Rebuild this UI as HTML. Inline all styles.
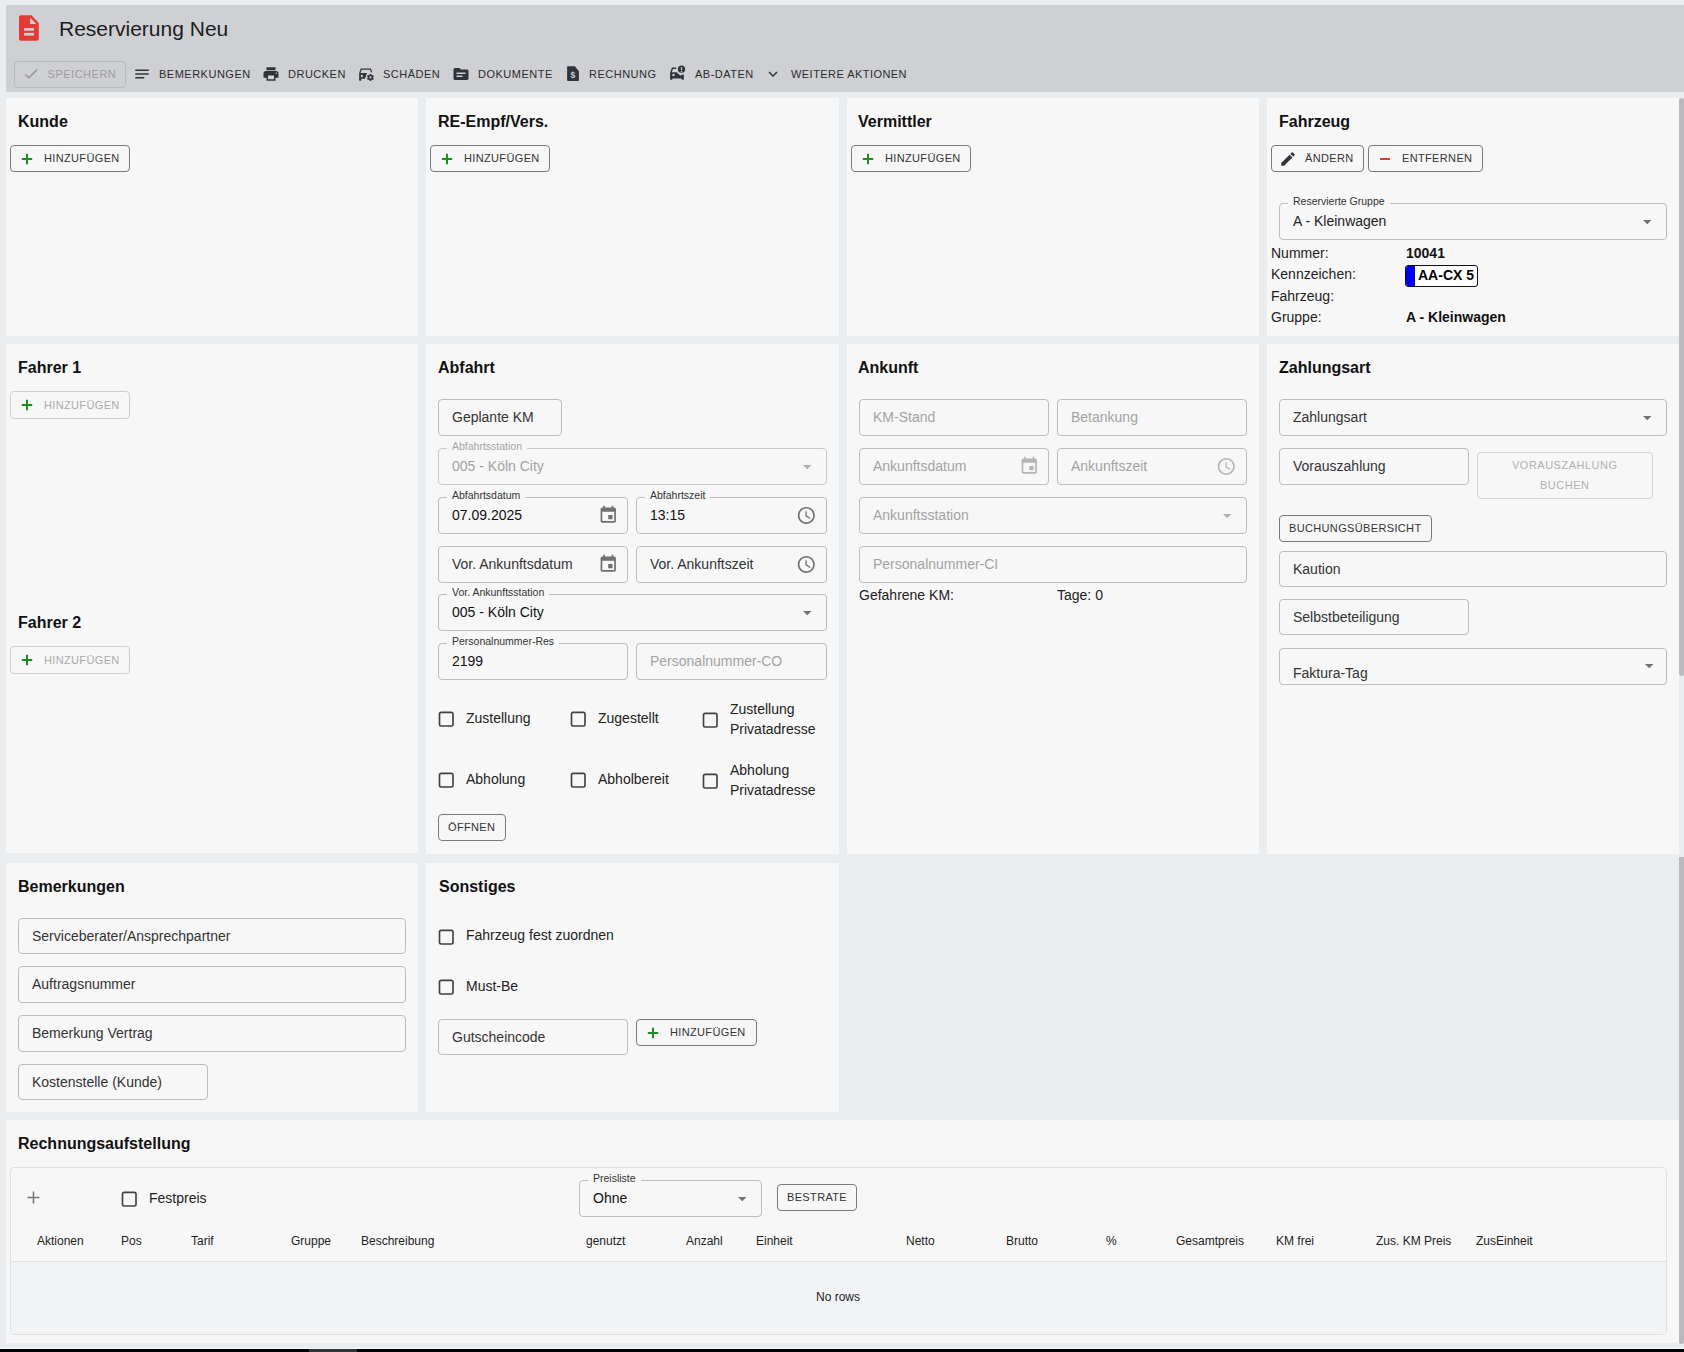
<!DOCTYPE html><html><head><meta charset="utf-8"><style>
html,body{margin:0;padding:0}body{width:1684px;height:1352px;position:relative;overflow:hidden;background:#e9edf0;font-family:"Liberation Sans",sans-serif}
.a{position:absolute;white-space:nowrap}svg{display:block}
</style></head><body>
<div class="a" style="left:6px;top:5px;width:1678px;height:87px;background:#cfd0d4"></div>
<div class="a" style="left:17px;top:13px;width:24px;height:30px"><svg width="24" height="30" viewBox="0 0 24 30"><path fill="#e53935" d="M4 2.2h10.4l7.4 7.9V25.7c0 1.2-.9 2-2 2H4c-1.1 0-2-.8-2-2V4.2c0-1.1.9-2 2-2z"/><path fill="#cfd0d4" d="M13.1 4.6V11h6.3z"/><rect x="7" y="15.1" width="10" height="2.6" fill="#cfd0d4"/><rect x="7" y="19.9" width="10" height="2.7" fill="#cfd0d4"/></svg></div>
<div class="a" style="left:59px;top:18.22px;font-size:21px;line-height:21px;color:#1c1c1c;font-weight:normal;">Reservierung Neu</div>
<div class="a" style="left:14px;top:61px;width:112px;height:27px;border:1px solid #b9babd;border-radius:4px;box-sizing:border-box"></div>
<div class="a" style="left:22px;top:65px;width:20px;height:20px"><svg width="20" height="20" viewBox="0 0 20 20"><g transform="translate(0.2 0) scale(0.733)"><path fill="#9a9a9a" d="M9 16.17L4.83 12l-1.42 1.41L9 19 21 7l-1.41-1.41z"/></g></svg></div>
<div class="a" style="left:47.6px;top:68.69px;font-size:11px;line-height:11px;color:#9d9d9f;font-weight:normal;letter-spacing:0.5px">SPEICHERN</div>
<div class="a" style="left:133px;top:65px;width:18px;height:18px"><svg width="18" height="18" viewBox="0 0 24 24"><path fill="#30343a" d="M3 18h12v-2H3v2zM3 6v2h18V6H3zm0 7h18v-2H3v2z"/></svg></div>
<div class="a" style="left:159px;top:68.69px;font-size:11px;line-height:11px;color:#2b2b2b;font-weight:normal;letter-spacing:0.5px">BEMERKUNGEN</div>
<div class="a" style="left:262px;top:65px;width:18px;height:18px"><svg width="18" height="18" viewBox="0 0 24 24"><path fill="#30343a" d="M19 8H5c-1.66 0-3 1.34-3 3v6h4v4h12v-4h4v-6c0-1.66-1.34-3-3-3zm-3 11H8v-5h8v5zm3-7c-.55 0-1-.45-1-1s.45-1 1-1 1 .45 1 1-.45 1-1 1zm-1-9H6v4h12V3z"/></svg></div>
<div class="a" style="left:288px;top:68.69px;font-size:11px;line-height:11px;color:#2b2b2b;font-weight:normal;letter-spacing:0.5px">DRUCKEN</div>
<div class="a" style="left:355px;top:62px;width:25px;height:24px"><svg width="25" height="24" viewBox="0 0 25 24"><path d="M5 18.3V10.3L6.2 7.2H15.5L16.7 10.4" fill="none" stroke="#30343a" stroke-width="1.25"/><path d="M4.4 10.9H12.1L9.9 16.8H4.4z" fill="#30343a"/><rect x="5.9" y="12.8" width="1.9" height="2.3" fill="#cfd0d4"/><rect x="4.3" y="16.3" width="2" height="2.5" rx="0.6" fill="#30343a"/><g transform="translate(15.45 15.45)" fill="#30343a"><circle r="2.7"/><rect x="-0.9" y="-3.5" width="1.8" height="7"/><rect x="-0.9" y="-3.5" width="1.8" height="7" transform="rotate(60)"/><rect x="-0.9" y="-3.5" width="1.8" height="7" transform="rotate(120)"/></g><circle cx="15.45" cy="15.45" r="1.1" fill="#cfd0d4"/></svg></div>
<div class="a" style="left:383px;top:68.69px;font-size:11px;line-height:11px;color:#2b2b2b;font-weight:normal;letter-spacing:0.5px">SCHÄDEN</div>
<div class="a" style="left:452px;top:65px;width:18px;height:18px"><svg width="18" height="18" viewBox="0 0 24 24"><path fill="#30343a" d="M20 6h-8l-2-2H4c-1.1 0-2 .9-2 2v12c0 1.1.9 2 2 2h16c1.1 0 2-.9 2-2V8c0-1.1-.9-2-2-2zm-6 10H6v-2h8v2zm4-4H6v-2h12v2z"/></svg></div>
<div class="a" style="left:478px;top:68.69px;font-size:11px;line-height:11px;color:#2b2b2b;font-weight:normal;letter-spacing:0.5px">DOKUMENTE</div>
<div class="a" style="left:560px;top:62px;width:30px;height:24px"><svg width="30" height="24" viewBox="0 0 30 24"><path d="M8.1 4.3H14.8L18.9 9.3V18.1c0 .55-.45 1-1 1H8.1c-.55 0-1-.45-1-1V5.3c0-.55.45-1 1-1z" fill="#30343a"/><text x="13" y="16" font-size="8.6" font-weight="bold" fill="#cfd0d4" text-anchor="middle" font-family="Liberation Sans">$</text></svg></div>
<div class="a" style="left:589px;top:68.69px;font-size:11px;line-height:11px;color:#2b2b2b;font-weight:normal;letter-spacing:0.5px">RECHNUNG</div>
<div class="a" style="left:665px;top:60px;width:30px;height:26px"><svg width="30" height="26" viewBox="0 0 30 26"><path d="M6 18.8V12.4L7.4 8.3H11.2" fill="none" stroke="#30343a" stroke-width="1.4"/><path d="M5.3 12.3H11.5L15.2 15.4L18.8 14.3V18.6H5.3z" fill="#30343a"/><circle cx="8.5" cy="15" r="1.25" fill="#cfd0d4"/><rect x="5.2" y="17.5" width="2.1" height="2.3" rx="0.6" fill="#30343a"/><rect x="16.6" y="17.5" width="2.2" height="2.3" rx="0.6" fill="#30343a"/><circle cx="16.5" cy="9.2" r="3.6" fill="#30343a"/><rect x="15.85" y="7.2" width="1.3" height="2.9" fill="#cfd0d4"/><rect x="15.85" y="10.9" width="1.3" height="1.1" fill="#cfd0d4"/></svg></div>
<div class="a" style="left:695px;top:68.69px;font-size:11px;line-height:11px;color:#2b2b2b;font-weight:normal;letter-spacing:0.5px">AB-DATEN</div>
<div class="a" style="left:764px;top:65px;width:18px;height:18px"><svg width="18" height="18" viewBox="0 0 24 24"><path fill="#30343a" d="M16.59 8.59L12 13.17 7.41 8.59 6 10l6 6 6-6z"/></svg></div>
<div class="a" style="left:791px;top:68.69px;font-size:11px;line-height:11px;color:#2b2b2b;font-weight:normal;letter-spacing:0.45px">WEITERE AKTIONEN</div>
<div class="a" style="left:6px;top:98px;width:412px;height:238px;background:#f7f7f7"></div>
<div class="a" style="left:426px;top:98px;width:413px;height:238px;background:#f7f7f7"></div>
<div class="a" style="left:847px;top:98px;width:412px;height:238px;background:#f7f7f7"></div>
<div class="a" style="left:1267px;top:98px;width:412px;height:238px;background:#f7f7f7"></div>
<div class="a" style="left:18px;top:114.46px;font-size:16px;line-height:16px;color:#111;font-weight:bold;">Kunde</div>
<div class="a" style="left:438px;top:114.46px;font-size:16px;line-height:16px;color:#111;font-weight:bold;">RE-Empf/Vers.</div>
<div class="a" style="left:858px;top:114.46px;font-size:16px;line-height:16px;color:#111;font-weight:bold;">Vermittler</div>
<div class="a" style="left:1279px;top:114.46px;font-size:16px;line-height:16px;color:#111;font-weight:bold;">Fahrzeug</div>
<div class="a" style="left:10px;top:145px;width:120px;height:27px;border:1px solid #7a7a7a;border-radius:4px;box-sizing:border-box"></div>
<div class="a" style="left:21px;top:152.5px;width:12px;height:12px"><svg width="12" height="12" viewBox="0 0 12 12"><path d="M6 0.8v10.4M0.8 6h10.4" stroke="#1e8c1e" stroke-width="2"/></svg></div>
<div class="a" style="left:44px;top:153.13px;font-size:11px;line-height:11px;color:#333;font-weight:normal;letter-spacing:0.35px">HINZUFÜGEN</div>
<div class="a" style="left:430px;top:145px;width:120px;height:27px;border:1px solid #7a7a7a;border-radius:4px;box-sizing:border-box"></div>
<div class="a" style="left:441px;top:152.5px;width:12px;height:12px"><svg width="12" height="12" viewBox="0 0 12 12"><path d="M6 0.8v10.4M0.8 6h10.4" stroke="#1e8c1e" stroke-width="2"/></svg></div>
<div class="a" style="left:464px;top:153.13px;font-size:11px;line-height:11px;color:#333;font-weight:normal;letter-spacing:0.35px">HINZUFÜGEN</div>
<div class="a" style="left:851px;top:145px;width:120px;height:27px;border:1px solid #7a7a7a;border-radius:4px;box-sizing:border-box"></div>
<div class="a" style="left:862px;top:152.5px;width:12px;height:12px"><svg width="12" height="12" viewBox="0 0 12 12"><path d="M6 0.8v10.4M0.8 6h10.4" stroke="#1e8c1e" stroke-width="2"/></svg></div>
<div class="a" style="left:885px;top:153.13px;font-size:11px;line-height:11px;color:#333;font-weight:normal;letter-spacing:0.35px">HINZUFÜGEN</div>
<div class="a" style="left:1271px;top:145px;width:93px;height:27px;border:1px solid #7a7a7a;border-radius:4px;box-sizing:border-box"></div>
<div class="a" style="left:1279px;top:149.5px;width:18px;height:18px"><svg width="18" height="18" viewBox="0 0 24 24"><path fill="#30343a" d="M3 17.25V21h3.75L17.81 9.94l-3.75-3.75L3 17.25zM20.71 7.04c.39-.39.39-1.02 0-1.41l-2.34-2.34c-.39-.39-1.02-.39-1.41 0l-1.83 1.83 3.75 3.75 1.83-1.83z"/></svg></div>
<div class="a" style="left:1305px;top:153.13px;font-size:11px;line-height:11px;color:#333;font-weight:normal;letter-spacing:0.35px">ÄNDERN</div>
<div class="a" style="left:1368px;top:145px;width:115px;height:27px;border:1px solid #7a7a7a;border-radius:4px;box-sizing:border-box"></div>
<div class="a" style="left:1379px;top:152.5px;width:12px;height:12px"><svg width="12" height="12" viewBox="0 0 12 12"><path d="M1 6h10" stroke="#e53935" stroke-width="2"/></svg></div>
<div class="a" style="left:1402px;top:153.13px;font-size:11px;line-height:11px;color:#333;font-weight:normal;letter-spacing:0.35px">ENTFERNEN</div>
<div class="a" style="left:1279px;top:203px;width:388px;height:37px;border:1px solid #bdbdbd;border-radius:4px;box-sizing:border-box"></div>
<div class="a" style="left:1288px;top:201px;width:101.6203125px;height:4px;background:#f7f7f7"></div>
<div class="a" style="left:1293px;top:196.11px;font-size:10.5px;line-height:10.5px;color:#333;font-weight:normal;">Reservierte Gruppe</div>
<div class="a" style="left:1293px;top:214.15px;font-size:14px;line-height:14px;color:#212121;font-weight:normal;">A - Kleinwagen</div>
<div class="a" style="left:1643.05px;top:220.00px;width:9px;height:5px"><svg width="9" height="5" viewBox="0 0 9 5"><path d="M0 0h8.5L4.25 4.3z" fill="#707070"/></svg></div>
<div class="a" style="left:1271px;top:246.15px;font-size:14px;line-height:14px;color:#222;font-weight:normal;">Nummer:</div>
<div class="a" style="left:1406px;top:246.15px;font-size:14px;line-height:14px;color:#111;font-weight:bold;">10041</div>
<div class="a" style="left:1271px;top:267.15px;font-size:14px;line-height:14px;color:#222;font-weight:normal;">Kennzeichen:</div>
<div class="a" style="left:1271px;top:289.15px;font-size:14px;line-height:14px;color:#222;font-weight:normal;">Fahrzeug:</div>
<div class="a" style="left:1271px;top:310.15px;font-size:14px;line-height:14px;color:#222;font-weight:normal;">Gruppe:</div>
<div class="a" style="left:1406px;top:310.15px;font-size:14px;line-height:14px;color:#111;font-weight:bold;">A - Kleinwagen</div>
<div class="a" style="left:1405px;top:265px;width:73px;height:22px;border:1.5px solid #111;border-radius:3px;box-sizing:border-box;background:#fff;overflow:hidden"><div style="position:absolute;left:0;top:0;width:9px;height:100%;background:#0000ee"></div></div>
<div class="a" style="left:1418px;top:268.15px;font-size:14px;line-height:14px;color:#000;font-weight:bold;">AA-CX 5</div>
<div class="a" style="left:6px;top:344px;width:412px;height:509px;background:#f7f7f7"></div>
<div class="a" style="left:426px;top:344px;width:413px;height:510px;background:#f7f7f7"></div>
<div class="a" style="left:847px;top:344px;width:412px;height:510px;background:#f7f7f7"></div>
<div class="a" style="left:1267px;top:344px;width:412px;height:510px;background:#f7f7f7"></div>
<div class="a" style="left:18px;top:360.46px;font-size:16px;line-height:16px;color:#111;font-weight:bold;">Fahrer 1</div>
<div class="a" style="left:438px;top:360.46px;font-size:16px;line-height:16px;color:#111;font-weight:bold;">Abfahrt</div>
<div class="a" style="left:858px;top:360.46px;font-size:16px;line-height:16px;color:#111;font-weight:bold;">Ankunft</div>
<div class="a" style="left:1279px;top:360.46px;font-size:16px;line-height:16px;color:#111;font-weight:bold;">Zahlungsart</div>
<div class="a" style="left:10px;top:391px;width:120px;height:28px;border:1px solid #cfcfcf;border-radius:4px;box-sizing:border-box"></div>
<div class="a" style="left:21px;top:399.0px;width:12px;height:12px"><svg width="12" height="12" viewBox="0 0 12 12"><path d="M6 0.8v10.4M0.8 6h10.4" stroke="#1e8c1e" stroke-width="2"/></svg></div>
<div class="a" style="left:44px;top:399.63px;font-size:11px;line-height:11px;color:#ababab;font-weight:normal;letter-spacing:0.35px">HINZUFÜGEN</div>
<div class="a" style="left:18px;top:615.46px;font-size:16px;line-height:16px;color:#111;font-weight:bold;">Fahrer 2</div>
<div class="a" style="left:10px;top:646px;width:120px;height:28px;border:1px solid #cfcfcf;border-radius:4px;box-sizing:border-box"></div>
<div class="a" style="left:21px;top:654.0px;width:12px;height:12px"><svg width="12" height="12" viewBox="0 0 12 12"><path d="M6 0.8v10.4M0.8 6h10.4" stroke="#1e8c1e" stroke-width="2"/></svg></div>
<div class="a" style="left:44px;top:654.63px;font-size:11px;line-height:11px;color:#ababab;font-weight:normal;letter-spacing:0.35px">HINZUFÜGEN</div>
<div class="a" style="left:438px;top:399px;width:124px;height:37px;border:1px solid #bdbdbd;border-radius:4px;box-sizing:border-box"></div>
<div class="a" style="left:452px;top:410.15px;font-size:14px;line-height:14px;color:#333;font-weight:normal;">Geplante KM</div>
<div class="a" style="left:438px;top:448px;width:389px;height:37px;border:1px solid #c9c9c9;border-radius:4px;box-sizing:border-box"></div>
<div class="a" style="left:447px;top:446px;width:80.0359375px;height:4px;background:#f7f7f7"></div>
<div class="a" style="left:452px;top:441.11px;font-size:10.5px;line-height:10.5px;color:#a6a6a6;font-weight:normal;">Abfahrtsstation</div>
<div class="a" style="left:452px;top:459.15px;font-size:14px;line-height:14px;color:#a3a3a3;font-weight:normal;">005 - Köln City</div>
<div class="a" style="left:803.05px;top:465.00px;width:9px;height:5px"><svg width="9" height="5" viewBox="0 0 9 5"><path d="M0 0h8.5L4.25 4.3z" fill="#b0b0b0"/></svg></div>
<div class="a" style="left:438px;top:497px;width:190px;height:37px;border:1px solid #bdbdbd;border-radius:4px;box-sizing:border-box"></div>
<div class="a" style="left:447px;top:495px;width:78.2828125px;height:4px;background:#f7f7f7"></div>
<div class="a" style="left:452px;top:490.11px;font-size:10.5px;line-height:10.5px;color:#333;font-weight:normal;">Abfahrtsdatum</div>
<div class="a" style="left:452px;top:508.15px;font-size:14px;line-height:14px;color:#111;font-weight:normal;">07.09.2025</div>
<div class="a" style="left:598px;top:504px;width:24px;height:24px"><svg width="24" height="24" viewBox="0 0 24 24"><g transform="translate(0.05 0.85) scale(0.85)"><path fill="#707070" d="M17 12h-5v5h5v-5zM16 1v2H8V1H6v2H5c-1.11 0-1.99.9-1.99 2L3 19c0 1.1.89 2 2 2h14c1.1 0 2-.9 2-2V5c0-1.1-.9-2-2-2h-1V1h-2zm3 18H5V8h14v11z"/></g></svg></div>
<div class="a" style="left:636px;top:497px;width:191px;height:37px;border:1px solid #bdbdbd;border-radius:4px;box-sizing:border-box"></div>
<div class="a" style="left:645px;top:495px;width:65.440625px;height:4px;background:#f7f7f7"></div>
<div class="a" style="left:650px;top:490.11px;font-size:10.5px;line-height:10.5px;color:#333;font-weight:normal;">Abfahrtszeit</div>
<div class="a" style="left:650px;top:508.15px;font-size:14px;line-height:14px;color:#111;font-weight:normal;">13:15</div>
<div class="a" style="left:794px;top:503px;width:24px;height:24px"><svg width="24" height="24" viewBox="0 0 24 24"><g transform="translate(2.10 2.20) scale(0.85)"><path fill="#707070" d="M11.99 2C6.47 2 2 6.48 2 12s4.47 10 9.99 10C17.52 22 22 17.52 22 12S17.52 2 11.99 2zM12 20c-4.42 0-8-3.58-8-8s3.58-8 8-8 8 3.58 8 8-3.58 8-8 8zm.5-13H11v6l5.25 3.15.75-1.23-4.5-2.67z"/></g></svg></div>
<div class="a" style="left:438px;top:546px;width:190px;height:37px;border:1px solid #bdbdbd;border-radius:4px;box-sizing:border-box"></div>
<div class="a" style="left:452px;top:557.15px;font-size:14px;line-height:14px;color:#333;font-weight:normal;">Vor. Ankunftsdatum</div>
<div class="a" style="left:598px;top:553px;width:24px;height:24px"><svg width="24" height="24" viewBox="0 0 24 24"><g transform="translate(0.05 0.85) scale(0.85)"><path fill="#707070" d="M17 12h-5v5h5v-5zM16 1v2H8V1H6v2H5c-1.11 0-1.99.9-1.99 2L3 19c0 1.1.89 2 2 2h14c1.1 0 2-.9 2-2V5c0-1.1-.9-2-2-2h-1V1h-2zm3 18H5V8h14v11z"/></g></svg></div>
<div class="a" style="left:636px;top:546px;width:191px;height:37px;border:1px solid #bdbdbd;border-radius:4px;box-sizing:border-box"></div>
<div class="a" style="left:650px;top:557.15px;font-size:14px;line-height:14px;color:#333;font-weight:normal;">Vor. Ankunftszeit</div>
<div class="a" style="left:794px;top:552px;width:24px;height:24px"><svg width="24" height="24" viewBox="0 0 24 24"><g transform="translate(2.10 2.20) scale(0.85)"><path fill="#707070" d="M11.99 2C6.47 2 2 6.48 2 12s4.47 10 9.99 10C17.52 22 22 17.52 22 12S17.52 2 11.99 2zM12 20c-4.42 0-8-3.58-8-8s3.58-8 8-8 8 3.58 8 8-3.58 8-8 8zm.5-13H11v6l5.25 3.15.75-1.23-4.5-2.67z"/></g></svg></div>
<div class="a" style="left:438px;top:594px;width:389px;height:37px;border:1px solid #bdbdbd;border-radius:4px;box-sizing:border-box"></div>
<div class="a" style="left:447px;top:592px;width:102.2234375px;height:4px;background:#f7f7f7"></div>
<div class="a" style="left:452px;top:587.11px;font-size:10.5px;line-height:10.5px;color:#333;font-weight:normal;">Vor. Ankunftsstation</div>
<div class="a" style="left:452px;top:605.15px;font-size:14px;line-height:14px;color:#111;font-weight:normal;">005 - Köln City</div>
<div class="a" style="left:803.05px;top:611.00px;width:9px;height:5px"><svg width="9" height="5" viewBox="0 0 9 5"><path d="M0 0h8.5L4.25 4.3z" fill="#707070"/></svg></div>
<div class="a" style="left:438px;top:643px;width:190px;height:37px;border:1px solid #bdbdbd;border-radius:4px;box-sizing:border-box"></div>
<div class="a" style="left:447px;top:641px;width:112.115625px;height:4px;background:#f7f7f7"></div>
<div class="a" style="left:452px;top:636.11px;font-size:10.5px;line-height:10.5px;color:#333;font-weight:normal;">Personalnummer-Res</div>
<div class="a" style="left:452px;top:654.15px;font-size:14px;line-height:14px;color:#111;font-weight:normal;">2199</div>
<div class="a" style="left:636px;top:643px;width:191px;height:37px;border:1px solid #bdbdbd;border-radius:4px;box-sizing:border-box"></div>
<div class="a" style="left:650px;top:654.15px;font-size:14px;line-height:14px;color:#a3a3a3;font-weight:normal;">Personalnummer-CO</div>
<div class="a" style="left:437px;top:710px;width:19px;height:19px"><svg width="19" height="19" viewBox="0 0 19 19"><rect x="2.5" y="2.35" width="13.5" height="13.6" rx="1.7" fill="none" stroke="#424242" stroke-width="1.65"/></svg></div>
<div class="a" style="left:569px;top:710px;width:19px;height:19px"><svg width="19" height="19" viewBox="0 0 19 19"><rect x="2.5" y="2.35" width="13.5" height="13.6" rx="1.7" fill="none" stroke="#424242" stroke-width="1.65"/></svg></div>
<div class="a" style="left:701px;top:711px;width:19px;height:19px"><svg width="19" height="19" viewBox="0 0 19 19"><rect x="2.5" y="2.35" width="13.5" height="13.6" rx="1.7" fill="none" stroke="#424242" stroke-width="1.65"/></svg></div>
<div class="a" style="left:437px;top:771px;width:19px;height:19px"><svg width="19" height="19" viewBox="0 0 19 19"><rect x="2.5" y="2.35" width="13.5" height="13.6" rx="1.7" fill="none" stroke="#424242" stroke-width="1.65"/></svg></div>
<div class="a" style="left:569px;top:771px;width:19px;height:19px"><svg width="19" height="19" viewBox="0 0 19 19"><rect x="2.5" y="2.35" width="13.5" height="13.6" rx="1.7" fill="none" stroke="#424242" stroke-width="1.65"/></svg></div>
<div class="a" style="left:701px;top:772px;width:19px;height:19px"><svg width="19" height="19" viewBox="0 0 19 19"><rect x="2.5" y="2.35" width="13.5" height="13.6" rx="1.7" fill="none" stroke="#424242" stroke-width="1.65"/></svg></div>
<div class="a" style="left:466px;top:711.15px;font-size:14px;line-height:14px;color:#222;font-weight:normal;">Zustellung</div>
<div class="a" style="left:598px;top:711.15px;font-size:14px;line-height:14px;color:#222;font-weight:normal;">Zugestellt</div>
<div class="a" style="left:730px;top:702.15px;font-size:14px;line-height:14px;color:#222;font-weight:normal;">Zustellung</div>
<div class="a" style="left:730px;top:722.15px;font-size:14px;line-height:14px;color:#222;font-weight:normal;">Privatadresse</div>
<div class="a" style="left:466px;top:772.15px;font-size:14px;line-height:14px;color:#222;font-weight:normal;">Abholung</div>
<div class="a" style="left:598px;top:772.15px;font-size:14px;line-height:14px;color:#222;font-weight:normal;">Abholbereit</div>
<div class="a" style="left:730px;top:763.15px;font-size:14px;line-height:14px;color:#222;font-weight:normal;">Abholung</div>
<div class="a" style="left:730px;top:783.15px;font-size:14px;line-height:14px;color:#222;font-weight:normal;">Privatadresse</div>
<div class="a" style="left:438px;top:814px;width:68px;height:27px;border:1px solid #7a7a7a;border-radius:4px;box-sizing:border-box"></div>
<div class="a" style="left:448px;top:822.13px;font-size:11px;line-height:11px;color:#333;font-weight:normal;letter-spacing:0.35px">ÖFFNEN</div>
<div class="a" style="left:859px;top:399px;width:190px;height:37px;border:1px solid #bdbdbd;border-radius:4px;box-sizing:border-box"></div>
<div class="a" style="left:873px;top:410.15px;font-size:14px;line-height:14px;color:#a3a3a3;font-weight:normal;">KM-Stand</div>
<div class="a" style="left:1057px;top:399px;width:190px;height:37px;border:1px solid #bdbdbd;border-radius:4px;box-sizing:border-box"></div>
<div class="a" style="left:1071px;top:410.15px;font-size:14px;line-height:14px;color:#a3a3a3;font-weight:normal;">Betankung</div>
<div class="a" style="left:859px;top:448px;width:190px;height:37px;border:1px solid #bdbdbd;border-radius:4px;box-sizing:border-box"></div>
<div class="a" style="left:873px;top:459.15px;font-size:14px;line-height:14px;color:#a3a3a3;font-weight:normal;">Ankunftsdatum</div>
<div class="a" style="left:1019px;top:455px;width:24px;height:24px"><svg width="24" height="24" viewBox="0 0 24 24"><g transform="translate(0.05 0.85) scale(0.85)"><path fill="#b5b5b5" d="M17 12h-5v5h5v-5zM16 1v2H8V1H6v2H5c-1.11 0-1.99.9-1.99 2L3 19c0 1.1.89 2 2 2h14c1.1 0 2-.9 2-2V5c0-1.1-.9-2-2-2h-1V1h-2zm3 18H5V8h14v11z"/></g></svg></div>
<div class="a" style="left:1057px;top:448px;width:190px;height:37px;border:1px solid #bdbdbd;border-radius:4px;box-sizing:border-box"></div>
<div class="a" style="left:1071px;top:459.15px;font-size:14px;line-height:14px;color:#a3a3a3;font-weight:normal;">Ankunftszeit</div>
<div class="a" style="left:1214px;top:454px;width:24px;height:24px"><svg width="24" height="24" viewBox="0 0 24 24"><g transform="translate(2.10 2.20) scale(0.85)"><path fill="#b5b5b5" d="M11.99 2C6.47 2 2 6.48 2 12s4.47 10 9.99 10C17.52 22 22 17.52 22 12S17.52 2 11.99 2zM12 20c-4.42 0-8-3.58-8-8s3.58-8 8-8 8 3.58 8 8-3.58 8-8 8zm.5-13H11v6l5.25 3.15.75-1.23-4.5-2.67z"/></g></svg></div>
<div class="a" style="left:859px;top:497px;width:388px;height:37px;border:1px solid #bdbdbd;border-radius:4px;box-sizing:border-box"></div>
<div class="a" style="left:873px;top:508.15px;font-size:14px;line-height:14px;color:#a3a3a3;font-weight:normal;">Ankunftsstation</div>
<div class="a" style="left:1223.05px;top:514.00px;width:9px;height:5px"><svg width="9" height="5" viewBox="0 0 9 5"><path d="M0 0h8.5L4.25 4.3z" fill="#b0b0b0"/></svg></div>
<div class="a" style="left:859px;top:546px;width:388px;height:37px;border:1px solid #bdbdbd;border-radius:4px;box-sizing:border-box"></div>
<div class="a" style="left:873px;top:557.15px;font-size:14px;line-height:14px;color:#a3a3a3;font-weight:normal;">Personalnummer-CI</div>
<div class="a" style="left:859px;top:588.15px;font-size:14px;line-height:14px;color:#222;font-weight:normal;">Gefahrene KM:</div>
<div class="a" style="left:1057px;top:588.15px;font-size:14px;line-height:14px;color:#222;font-weight:normal;">Tage: 0</div>
<div class="a" style="left:1279px;top:399px;width:388px;height:37px;border:1px solid #bdbdbd;border-radius:4px;box-sizing:border-box"></div>
<div class="a" style="left:1293px;top:410.15px;font-size:14px;line-height:14px;color:#333;font-weight:normal;">Zahlungsart</div>
<div class="a" style="left:1643.05px;top:416.00px;width:9px;height:5px"><svg width="9" height="5" viewBox="0 0 9 5"><path d="M0 0h8.5L4.25 4.3z" fill="#707070"/></svg></div>
<div class="a" style="left:1279px;top:448px;width:190px;height:37px;border:1px solid #bdbdbd;border-radius:4px;box-sizing:border-box"></div>
<div class="a" style="left:1293px;top:459.15px;font-size:14px;line-height:14px;color:#333;font-weight:normal;">Vorauszahlung</div>
<div class="a" style="left:1477px;top:452px;width:176px;height:47px;border:1px solid #d3d3d3;border-radius:4px;box-sizing:border-box"></div>
<div class="a" style="left:1512px;top:459.69px;font-size:11px;line-height:11px;color:#b0b0b0;font-weight:normal;letter-spacing:0.5px">VORAUSZAHLUNG</div>
<div class="a" style="left:1540px;top:479.69px;font-size:11px;line-height:11px;color:#b0b0b0;font-weight:normal;letter-spacing:0.5px">BUCHEN</div>
<div class="a" style="left:1279px;top:515px;width:153px;height:27px;border:1px solid #7a7a7a;border-radius:4px;box-sizing:border-box"></div>
<div class="a" style="left:1289px;top:523.13px;font-size:11px;line-height:11px;color:#333;font-weight:normal;letter-spacing:0.35px">BUCHUNGSÜBERSICHT</div>
<div class="a" style="left:1279px;top:551px;width:388px;height:36px;border:1px solid #bdbdbd;border-radius:4px;box-sizing:border-box"></div>
<div class="a" style="left:1293px;top:562.15px;font-size:14px;line-height:14px;color:#333;font-weight:normal;">Kaution</div>
<div class="a" style="left:1279px;top:599px;width:190px;height:36px;border:1px solid #bdbdbd;border-radius:4px;box-sizing:border-box"></div>
<div class="a" style="left:1293px;top:610.15px;font-size:14px;line-height:14px;color:#333;font-weight:normal;">Selbstbeteiligung</div>
<div class="a" style="left:1279px;top:648px;width:388px;height:37px;border:1px solid #bdbdbd;border-radius:4px;box-sizing:border-box"></div>
<div class="a" style="left:1644.55px;top:664.00px;width:9px;height:5px"><svg width="9" height="5" viewBox="0 0 9 5"><path d="M0 0h8.5L4.25 4.3z" fill="#707070"/></svg></div>
<div class="a" style="left:1293px;top:666.15px;font-size:14px;line-height:14px;color:#333;font-weight:normal;">Faktura-Tag</div>
<div class="a" style="left:6px;top:863px;width:412px;height:249px;background:#f7f7f7"></div>
<div class="a" style="left:426px;top:863px;width:413px;height:249px;background:#f7f7f7"></div>
<div class="a" style="left:18px;top:879.46px;font-size:16px;line-height:16px;color:#111;font-weight:bold;">Bemerkungen</div>
<div class="a" style="left:439px;top:879.46px;font-size:16px;line-height:16px;color:#111;font-weight:bold;">Sonstiges</div>
<div class="a" style="left:18px;top:918px;width:388px;height:36px;border:1px solid #bdbdbd;border-radius:4px;box-sizing:border-box"></div>
<div class="a" style="left:32px;top:929.15px;font-size:14px;line-height:14px;color:#333;font-weight:normal;">Serviceberater/Ansprechpartner</div>
<div class="a" style="left:18px;top:966px;width:388px;height:37px;border:1px solid #bdbdbd;border-radius:4px;box-sizing:border-box"></div>
<div class="a" style="left:32px;top:977.15px;font-size:14px;line-height:14px;color:#333;font-weight:normal;">Auftragsnummer</div>
<div class="a" style="left:18px;top:1015px;width:388px;height:37px;border:1px solid #bdbdbd;border-radius:4px;box-sizing:border-box"></div>
<div class="a" style="left:32px;top:1026.15px;font-size:14px;line-height:14px;color:#333;font-weight:normal;">Bemerkung Vertrag</div>
<div class="a" style="left:18px;top:1064px;width:190px;height:36px;border:1px solid #bdbdbd;border-radius:4px;box-sizing:border-box"></div>
<div class="a" style="left:32px;top:1075.15px;font-size:14px;line-height:14px;color:#333;font-weight:normal;">Kostenstelle (Kunde)</div>
<div class="a" style="left:437px;top:928px;width:19px;height:19px"><svg width="19" height="19" viewBox="0 0 19 19"><rect x="2.5" y="2.35" width="13.5" height="13.6" rx="1.7" fill="none" stroke="#424242" stroke-width="1.65"/></svg></div>
<div class="a" style="left:466px;top:928.15px;font-size:14px;line-height:14px;color:#222;font-weight:normal;">Fahrzeug fest zuordnen</div>
<div class="a" style="left:437px;top:978px;width:19px;height:19px"><svg width="19" height="19" viewBox="0 0 19 19"><rect x="2.5" y="2.35" width="13.5" height="13.6" rx="1.7" fill="none" stroke="#424242" stroke-width="1.65"/></svg></div>
<div class="a" style="left:466px;top:979.15px;font-size:14px;line-height:14px;color:#222;font-weight:normal;">Must-Be</div>
<div class="a" style="left:438px;top:1019px;width:190px;height:36px;border:1px solid #bdbdbd;border-radius:4px;box-sizing:border-box"></div>
<div class="a" style="left:452px;top:1030.15px;font-size:14px;line-height:14px;color:#333;font-weight:normal;">Gutscheincode</div>
<div class="a" style="left:636px;top:1019px;width:121px;height:27px;border:1px solid #7a7a7a;border-radius:4px;box-sizing:border-box"></div>
<div class="a" style="left:647px;top:1026.5px;width:12px;height:12px"><svg width="12" height="12" viewBox="0 0 12 12"><path d="M6 0.8v10.4M0.8 6h10.4" stroke="#1e8c1e" stroke-width="2"/></svg></div>
<div class="a" style="left:670px;top:1027.13px;font-size:11px;line-height:11px;color:#333;font-weight:normal;letter-spacing:0.35px">HINZUFÜGEN</div>
<div class="a" style="left:6px;top:1120px;width:1673px;height:223px;background:#f7f7f7"></div>
<div class="a" style="left:18px;top:1136.46px;font-size:16px;line-height:16px;color:#111;font-weight:bold;">Rechnungsaufstellung</div>
<div class="a" style="left:10px;top:1167px;width:1657px;height:168px;border:1px solid #e0e0e0;border-radius:4px;box-sizing:border-box;overflow:hidden"><div style="position:absolute;left:0;right:0;top:93px;bottom:0;background:#f2f3f5;border-top:1px solid #e0e0e0"></div></div>
<div class="a" style="left:26.6px;top:1191px;width:13px;height:13px"><svg width="13" height="13" viewBox="0 0 13 13"><path d="M6.5 0.5v12M0.5 6.5h12" stroke="#757575" stroke-width="1.5"/></svg></div>
<div class="a" style="left:120px;top:1190px;width:19px;height:19px"><svg width="19" height="19" viewBox="0 0 19 19"><rect x="2.5" y="2.35" width="13.5" height="13.6" rx="1.7" fill="none" stroke="#424242" stroke-width="1.65"/></svg></div>
<div class="a" style="left:149px;top:1191.15px;font-size:14px;line-height:14px;color:#222;font-weight:normal;">Festpreis</div>
<div class="a" style="left:579px;top:1180px;width:183px;height:37px;border:1px solid #bdbdbd;border-radius:4px;box-sizing:border-box"></div>
<div class="a" style="left:588px;top:1178px;width:52.59375px;height:4px;background:#f7f7f7"></div>
<div class="a" style="left:593px;top:1173.11px;font-size:10.5px;line-height:10.5px;color:#333;font-weight:normal;">Preisliste</div>
<div class="a" style="left:593px;top:1191.15px;font-size:14px;line-height:14px;color:#111;font-weight:normal;">Ohne</div>
<div class="a" style="left:738.05px;top:1197.00px;width:9px;height:5px"><svg width="9" height="5" viewBox="0 0 9 5"><path d="M0 0h8.5L4.25 4.3z" fill="#707070"/></svg></div>
<div class="a" style="left:777px;top:1184px;width:80px;height:27px;border:1px solid #7a7a7a;border-radius:4px;box-sizing:border-box"></div>
<div class="a" style="left:787px;top:1192.13px;font-size:11px;line-height:11px;color:#333;font-weight:normal;letter-spacing:0.35px">BESTRATE</div>
<div class="a" style="left:37px;top:1234.84px;font-size:12px;line-height:12px;color:#222;font-weight:normal;">Aktionen</div>
<div class="a" style="left:121px;top:1234.84px;font-size:12px;line-height:12px;color:#222;font-weight:normal;">Pos</div>
<div class="a" style="left:191px;top:1234.84px;font-size:12px;line-height:12px;color:#222;font-weight:normal;">Tarif</div>
<div class="a" style="left:291px;top:1234.84px;font-size:12px;line-height:12px;color:#222;font-weight:normal;">Gruppe</div>
<div class="a" style="left:361px;top:1234.84px;font-size:12px;line-height:12px;color:#222;font-weight:normal;">Beschreibung</div>
<div class="a" style="left:586px;top:1234.84px;font-size:12px;line-height:12px;color:#222;font-weight:normal;">genutzt</div>
<div class="a" style="left:686px;top:1234.84px;font-size:12px;line-height:12px;color:#222;font-weight:normal;">Anzahl</div>
<div class="a" style="left:756px;top:1234.84px;font-size:12px;line-height:12px;color:#222;font-weight:normal;">Einheit</div>
<div class="a" style="left:906px;top:1234.84px;font-size:12px;line-height:12px;color:#222;font-weight:normal;">Netto</div>
<div class="a" style="left:1006px;top:1234.84px;font-size:12px;line-height:12px;color:#222;font-weight:normal;">Brutto</div>
<div class="a" style="left:1106px;top:1234.84px;font-size:12px;line-height:12px;color:#222;font-weight:normal;">%</div>
<div class="a" style="left:1176px;top:1234.84px;font-size:12px;line-height:12px;color:#222;font-weight:normal;">Gesamtpreis</div>
<div class="a" style="left:1276px;top:1234.84px;font-size:12px;line-height:12px;color:#222;font-weight:normal;">KM frei</div>
<div class="a" style="left:1376px;top:1234.84px;font-size:12px;line-height:12px;color:#222;font-weight:normal;">Zus. KM Preis</div>
<div class="a" style="left:1476px;top:1234.84px;font-size:12px;line-height:12px;color:#222;font-weight:normal;">ZusEinheit</div>
<div class="a" style="left:816px;top:1290.84px;font-size:12px;line-height:12px;color:#222;font-weight:normal;">No rows</div>
<div class="a" style="left:1679px;top:98px;width:5px;height:578px;background:#bab9be;border-radius:3px"></div>
<div class="a" style="left:1679px;top:857px;width:5px;height:487px;background:#bab9be;border-radius:0 0 3px 3px"></div>
<div class="a" style="left:0px;top:1348px;width:1684px;height:1px;background:#f5f9fb"></div>
<div class="a" style="left:0px;top:1349px;width:1684px;height:3px;background:#000"></div>
<div class="a" style="left:309px;top:1349px;width:48px;height:3px;background:#333"></div>
</body></html>
